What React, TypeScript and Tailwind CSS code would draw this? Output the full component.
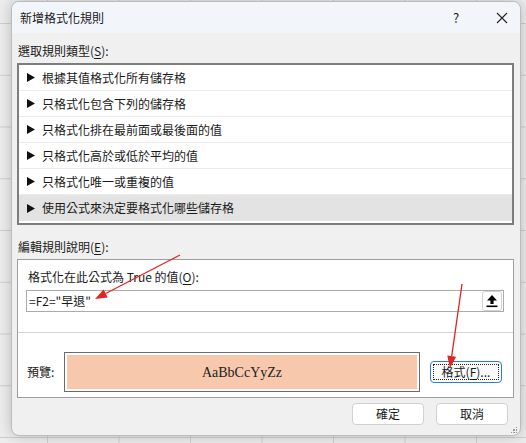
import React from "react";

const cjk = "font-['Noto_Sans_CJK_TC','Noto_Sans',sans-serif]";

const rules = [
  "根據其值格式化所有儲存格",
  "只格式化包含下列的儲存格",
  "只格式化排在最前面或最後面的值",
  "只格式化高於或低於平均的值",
  "只格式化唯一或重複的值",
  "使用公式來決定要格式化哪些儲存格",
];

function Triangle() {
  return (
    <svg width="8" height="9" viewBox="0 0 8 9" className="shrink-0">
      <polygon points="0,0 8,4.5 0,9" fill="#111" />
    </svg>
  );
}

function UploadIcon() {
  return (
    <svg width="12" height="14" viewBox="0 0 12 14">
      <polygon points="6,1 11,6.5 7.6,6.5 7.6,10 4.4,10 4.4,6.5 1,6.5" fill="#000" />
      <rect x="0.5" y="11.5" width="11" height="1.6" fill="#000" />
    </svg>
  );
}

function Arrow({ x1, y1, x2, y2 }: { x1: number; y1: number; x2: number; y2: number }) {
  const dx = x2 - x1;
  const dy = y2 - y1;
  const len = Math.hypot(dx, dy);
  const ux = dx / len;
  const uy = dy / len;
  const head = 12;
  const half = 4.5;
  const bx = x2 - ux * head;
  const by = y2 - uy * head;
  const px = -uy * half;
  const py = ux * half;
  return (
    <g>
      <line x1={x1} y1={y1} x2={bx} y2={by} stroke="#e32222" strokeWidth="1.3" />
      <polygon points={`${x2},${y2} ${bx + px},${by + py} ${bx - px},${by - py}`} fill="#e32222" />
    </g>
  );
}

export default function App() {
  return (
    <div
      className={`relative w-[526px] h-[443px] overflow-hidden bg-[#ededed] bg-[linear-gradient(to_right,#cfcfcf_1px,transparent_1px),linear-gradient(to_bottom,#cfcfcf_1px,transparent_1px)] bg-size-[71.5px_51.75px] bg-position-[47px_23px] ${cjk} text-[12px] text-[#1a1a1a]`}
    >
      {/* dialog */}
      <div className="ml-[11px] mt-[1px] w-[510px] h-[435px] rounded-[8px] border border-[#bcbcbc] bg-[#f0f0f0] shadow-[0_0_14px_rgba(0,0,0,0.22)] flex flex-col overflow-hidden">
        {/* title bar */}
        <div className="h-[31px] shrink-0 bg-[#f2f5fa] flex items-center pl-[8px]">
          <span className="leading-[16px]">新增格式化規則</span>
          <span className="ml-auto w-[14px] text-center text-[13px] leading-[16px]">?</span>
          <svg width="12" height="12" viewBox="0 0 12 12" className="ml-[33px] mr-[12px]">
            <path d="M1 1 L11 11 M11 1 L1 11" stroke="#222" strokeWidth="1.1" />
          </svg>
        </div>

        <div className="pl-[6px] h-[30px] pt-[6px] flex items-center leading-[16px]">
          選取規則類型(<span className="underline underline-offset-2">S</span>):
        </div>

        {/* rule type list */}
        <div className="ml-[5px] w-[497px] h-[162px] border-2 border-[#7d7d7d] bg-white flex flex-col">
          {rules.map((r, i) => (
            <div
              key={r}
              className={`h-[26px] flex items-center gap-[7px] pl-[8px] leading-[16px] ${
                i === rules.length - 1 ? "bg-[#e3e3e3]" : "border-b border-[#ececec]"
              }`}
            >
              <Triangle />
              <span>{r}</span>
            </div>
          ))}
        </div>

        <div className="pl-[6px] h-[34px] pt-[10px] flex items-center leading-[16px]">
          編輯規則說明(<span className="underline underline-offset-2">E</span>):
        </div>

        {/* rule description */}
        <div className="ml-[5px] w-[497px] h-[139px] border border-[#9e9e9e] bg-white flex flex-col">
          <div className="pl-[10px] pt-[9px] leading-[16px]">
            格式化在此公式為 True 的值(<span className="underline underline-offset-2">O</span>):
          </div>
          <div className="mt-[5px] ml-[8px] w-[478px] h-[22px] border border-[#ababab] flex items-center pl-[2px] pr-[1px]">
            <span className="leading-[16px]">=F2="早退"</span>
            <div className="ml-auto w-[20px] h-[20px] rounded-[3px] border border-[#d2d2d2] bg-white flex items-center justify-center">
              <UploadIcon />
            </div>
          </div>
          <div className="mt-[20px] h-px bg-[#d4d4d4]" />
          <div className="mt-[19px] flex items-center">
            <span className="pl-[9px] w-[46px] leading-[16px]">預覽:</span>
            <div className="w-[356px] h-[40px] border border-[#6a6a6a] p-[2px] bg-white">
              <div className="h-full bg-[#f7c8ac] flex items-center justify-center font-['Liberation_Serif',serif] text-[14px] text-[#222]">
                AaBbCcYyZz
              </div>
            </div>
            <div className="ml-[10px] w-[72px] h-[22px] rounded-[4px] border border-[#2f7fcf] bg-[#fbfbfb] p-[2px]">
              <div className="h-full border border-dotted border-[#222] flex items-center justify-center leading-[14px]">
                格式(<span className="underline underline-offset-2">F</span>)...
              </div>
            </div>
          </div>
        </div>

        {/* footer buttons */}
        <div className="mt-[5px] flex justify-end gap-[12px] pr-[12px]">
          <button className="w-[72px] h-[22px] rounded-[4px] border border-[#d0d0d0] bg-white leading-[16px]">確定</button>
          <button className="w-[72px] h-[22px] rounded-[4px] border border-[#d0d0d0] bg-white leading-[16px]">取消</button>
        </div>
        <div className="mt-auto mb-[2px] mr-[3px] self-end grid grid-cols-3 gap-[1px]">
          {[0, 1, 2, 3, 4, 5, 6, 7, 8].map((n) => (
            <span
              key={n}
              className={`w-[1.5px] h-[1.5px] ${n === 0 || n === 1 || n === 3 ? "bg-transparent" : "bg-[#9a9a9a]"}`}
            />
          ))}
        </div>
      </div>

      {/* annotation arrows */}
      <svg className="absolute inset-0 pointer-events-none" width="526" height="443">
        <Arrow x1={180} y1={255} x2={95} y2={299} />
        <Arrow x1={462} y1={284} x2={450} y2={368} />
      </svg>
    </div>
  );
}
